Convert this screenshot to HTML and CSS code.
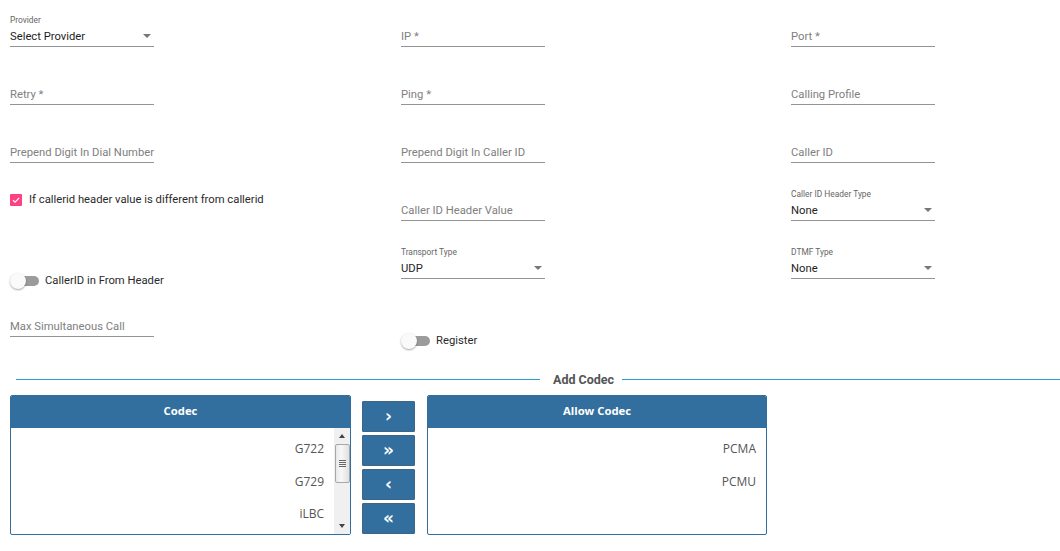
FILE: index.html
```html
<!DOCTYPE html>
<html>
<head>
<meta charset="utf-8">
<link rel="stylesheet" href="styles.css">
</head>
<body>
<div class="form">
  <div class="field select">
    <div class="small">Provider</div>
    <div class="control"><span class="value">Select Provider</span><span class="caret"></span></div>
  </div>
  <div class="field"><div class="control"><span class="ph">IP *</span></div></div>
  <div class="field"><div class="control"><span class="ph">Port *</span></div></div>

  <div class="field"><div class="control"><span class="ph">Retry *</span></div></div>
  <div class="field"><div class="control"><span class="ph">Ping *</span></div></div>
  <div class="field"><div class="control"><span class="ph">Calling Profile</span></div></div>

  <div class="field"><div class="control"><span class="ph">Prepend Digit In Dial Number</span></div></div>
  <div class="field"><div class="control"><span class="ph">Prepend Digit In Caller ID</span></div></div>
  <div class="field"><div class="control"><span class="ph">Caller ID</span></div></div>

  <div class="check-cell">
    <span class="checkbox"><svg width="12" height="12" viewBox="0 0 12 12"><path d="M3 6.2 L5.1 8.2 L9.2 3.8" fill="none" stroke="#fff" stroke-width="1.2"/></svg></span>
    <span class="check-label">If callerid header value is different from callerid</span>
  </div>
  <div class="field"><div class="control"><span class="ph">Caller ID Header Value</span></div></div>
  <div class="field select">
    <div class="small">Caller ID Header Type</div>
    <div class="control"><span class="value">None</span><span class="caret"></span></div>
  </div>

  <div class="toggle-cell t1">
    <span class="toggle"><span class="track"></span><span class="thumb"></span></span>
    <span class="toggle-label">CallerID in From Header</span>
  </div>
  <div class="field select">
    <div class="small">Transport Type</div>
    <div class="control"><span class="value">UDP</span><span class="caret"></span></div>
  </div>
  <div class="field select">
    <div class="small">DTMF Type</div>
    <div class="control"><span class="value">None</span><span class="caret"></span></div>
  </div>

  <div class="field"><div class="control"><span class="ph">Max Simultaneous Call</span></div></div>
  <div class="toggle-cell t2">
    <span class="toggle"><span class="track"></span><span class="thumb"></span></span>
    <span class="toggle-label">Register</span>
  </div>
  <div></div>
</div>

<div class="divider">
  <span class="line left"></span>
  <span class="divider-text">Add Codec</span>
  <span class="line right"></span>
</div>

<div class="codec">
  <div class="panel left-panel">
    <div class="panel-head">Codec</div>
    <div class="panel-body">
      <ul class="items">
        <li>G722</li>
        <li>G729</li>
        <li>iLBC</li>
      </ul>
      <div class="scrollbar">
        <span class="arrow up"></span>
        <span class="sthumb"><span class="grip"></span></span>
        <span class="arrow down"></span>
      </div>
    </div>
  </div>
  <div class="buttons">
    <button class="btn">&#8250;</button>
    <button class="btn">&#187;</button>
    <button class="btn">&#8249;</button>
    <button class="btn">&#171;</button>
  </div>
  <div class="panel right-panel">
    <div class="panel-head">Allow Codec</div>
    <div class="panel-body">
      <ul class="items">
        <li>PCMA</li>
        <li>PCMU</li>
      </ul>
    </div>
  </div>
</div>
</body>
</html>
```

FILE: styles.css
```css
* { box-sizing: border-box; }
html, body { margin: 0; padding: 0; background: #fff; }
body {
  font-family: Roboto, "Liberation Sans", Arial, sans-serif;
  color: #222;
  width: 1060px;
  overflow: hidden;
}

.form {
  display: grid;
  grid-template-columns: 391px 390px 269px;
  grid-auto-rows: 58px;
  padding-left: 10px;
}

.field {
  width: 144px;
  height: 58px;
  display: flex;
  flex-direction: column;
  justify-content: flex-end;
}
.field .small {
  font-size: 8.4px;
  line-height: 10px;
  margin-bottom: -1px;
  color: #666;
  white-space: nowrap;
}
.field .control {
  height: 23px;
  margin-bottom: 11px;
  padding-top: 2px;
  border-bottom: 1px solid #949494;
  display: flex;
  align-items: center;
  justify-content: space-between;
  font-size: 11.25px;
  white-space: nowrap;
}
.field .ph { color: #808080; }
.field .value { color: #1e1e1e; }
.caret {
  width: 0; height: 0;
  border-left: 4px solid transparent;
  border-right: 4px solid transparent;
  border-top: 4px solid #777;
  margin-right: 3px;
}

.check-cell {
  padding-top: 20px;
  display: flex;
  height: 58px;
  align-items: flex-start;
  white-space: nowrap;
}
.checkbox {
  width: 12px; height: 12px;
  background: #ff4081;
  border-radius: 1px;
  display: block;
  flex: none;
}
.checkbox svg { display: block; }
.check-label {
  font-size: 11.25px;
  line-height: 12px;
  margin-left: 7px;
  color: #2a2a2a;
}

.toggle-cell {
  display: flex;
  height: 58px;
  align-items: flex-start;
  white-space: nowrap;
}
.toggle-cell.t1 { padding-top: 41px; }
.toggle-cell.t2 { padding-top: 43px; }
.toggle {
  position: relative;
  width: 29px; height: 16px;
  display: block;
  flex: none;
}
.toggle .track {
  position: absolute;
  left: 2px; top: 3px;
  width: 27px; height: 10px;
  border-radius: 5px;
  background: #9b9b9b;
}
.toggle .thumb {
  position: absolute;
  left: 0; top: 0;
  width: 16px; height: 16px;
  border-radius: 50%;
  background: #fafafa;
  box-shadow: 0 1px 2px rgba(0,0,0,0.35);
}
.toggle-label {
  font-size: 11.25px;
  line-height: 16px;
  margin-left: 6px;
  color: #2a2a2a;
}

.divider {
  margin-top: 21px;
  height: 20px;
  display: flex;
  align-items: center;
  padding-left: 16px;
}
.divider .line {
  height: 1px;
  background: #2a9fd2;
  display: block;
}
.divider .line.left { width: 524px; }
.divider .line.right { flex: 1; }
.divider-text {
  font-size: 12.5px;
  font-weight: bold;
  color: #555;
  margin: 0 8px 0 13px;
  white-space: nowrap;
}

.codec {
  margin-top: 6px;
  display: flex;
  padding-left: 10px;
  font-family: "Open Sans", "Liberation Sans", Arial, sans-serif;
}
.panel {
  height: 140px;
  border: 1px solid #336f9e;
  border-radius: 2px;
  display: flex;
  flex-direction: column;
  overflow: hidden;
}
.left-panel { width: 341px; }
.right-panel { width: 340px; margin-left: 12px; }
.panel-head {
  height: 32px;
  padding-bottom: 3px;
  background: #336f9e;
  color: #fff;
  font-size: 11.3px;
  font-weight: bold;
  display: flex;
  align-items: center;
  justify-content: center;
  flex: none;
}
.panel-body {
  flex: 1;
  display: flex;
}
.items {
  list-style: none;
  margin: 0;
  padding: 5px 0 0 0;
  flex: 1;
}
.items li {
  height: 32.5px;
  line-height: 32px;
  text-align: right;
  font-size: 12px;
  color: #555;
}
.left-panel .items li { padding-right: 10px; }
.right-panel .items li { padding-right: 10px; }

.scrollbar {
  width: 16px;
  background: #f0f0f0;
  display: flex;
  flex-direction: column;
  align-items: center;
  flex: none;
}
.arrow {
  width: 0; height: 0;
  border-left: 3.5px solid transparent;
  border-right: 3.5px solid transparent;
  display: block;
}
.arrow.up { border-bottom: 4px solid #444; margin-top: 6px; }
.arrow.down { border-top: 4px solid #444; margin-top: auto; margin-bottom: 6px; }
.sthumb {
  margin-top: 6px;
  width: 15px;
  height: 39px;
  border: 1px solid #a8a8a8;
  border-radius: 2px;
  background: linear-gradient(to right, #e8e8e8, #f8f8f8 40%, #e0e0e0);
  display: flex;
  align-items: center;
  justify-content: center;
}
.grip {
  width: 7px; height: 7px;
  background: repeating-linear-gradient(to bottom, #666 0, #666 1px, transparent 1px, transparent 2px);
  display: block;
}

.buttons {
  width: 53px;
  margin-left: 11px;
  padding-top: 6px;
  display: flex;
  flex-direction: column;
  gap: 3px;
}
.btn {
  height: 31px;
  width: 53px;
  background: #336f9e;
  border: 1px solid #3d6585;
  border-radius: 1px;
  color: #fff;
  font-family: "DejaVu Sans", "Liberation Sans", sans-serif;
  font-size: 17px;
  font-weight: bold;
  line-height: 1;
  padding: 0;
  display: flex;
  align-items: center;
  justify-content: center;
}
```
